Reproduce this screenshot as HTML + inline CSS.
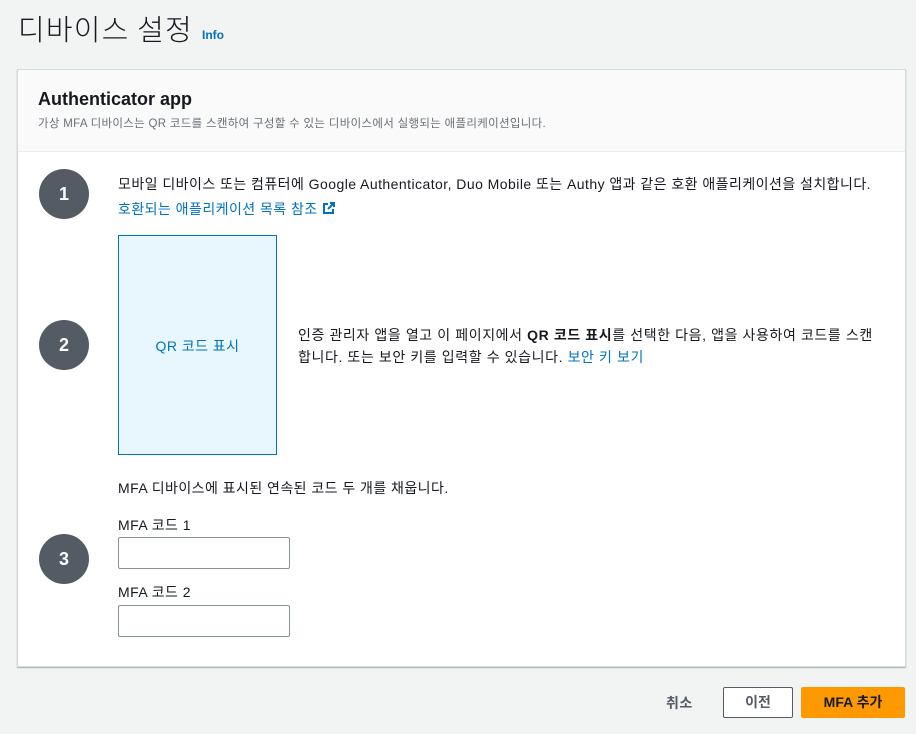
<!DOCTYPE html>
<html><head><meta charset="utf-8"><style>
body{margin:0;width:916px;height:734px;background:#f2f3f3;font-family:"Liberation Sans","Noto Sans CJK KR",sans-serif;color:#16191f;position:relative;overflow:hidden}
.a{position:absolute}
h1{position:absolute;left:18px;top:7px;margin:0;font-weight:300;font-size:29px;letter-spacing:1.2px;font-family:"Noto Sans CJK KR",sans-serif;color:#16191f}
.info{position:absolute;left:202px;top:28px;font-size:12px;font-weight:bold;color:#0073bb}
.card{position:absolute;left:17px;top:69px;width:887px;height:596px;background:#fff;border:1px solid #d5dbdb;box-shadow:0 1px 1px rgba(0,28,36,.3)}
.hd{position:absolute;left:0;top:0;width:887px;height:81px;background:#fafafa;border-bottom:1px solid #eaeded}
.circ{position:absolute;left:21px;width:50px;height:50px;border-radius:50%;background:#545b64;color:#fff;font-weight:bold;font-size:18px;text-align:center;line-height:50px}
.t{font-size:14px;white-space:nowrap;letter-spacing:0.45px}
.lnk{color:#0073bb}
.inp{position:absolute;left:100px;width:170px;height:30px;border:1px solid #879596;border-radius:2px;background:#fff}
</style></head><body>
<h1>디바이스 설정</h1><div class="info">Info</div>
<div class="card">
 <div class="hd">
  <div class="a" style="left:20px;top:19px;font-size:18px;font-weight:bold">Authenticator app</div>
  <div class="a t" style="left:20px;top:45px;font-size:11.5px;color:#687078;letter-spacing:0.3px">가상 MFA 디바이스는 QR 코드를 스캔하여 구성할 수 있는 디바이스에서 실행되는 애플리케이션입니다.</div>
 </div>
 <div class="circ" style="top:99px">1</div>
 <div class="a t" style="left:100px;top:104px">모바일 디바이스 또는 컴퓨터에 Google Authenticator, Duo Mobile 또는 Authy 앱과 같은 호환 애플리케이션을 설치합니다.</div>
 <div class="a t lnk" style="left:100px;top:129px">호환되는 애플리케이션 목록 참조 <svg width="13" height="13" viewBox="0 0 13 13" style="vertical-align:-1px"><path d="M6 2H2v9h9V7" fill="none" stroke="#0073bb" stroke-width="2"/><path d="M8 1h4v4M12 1L6 7" fill="none" stroke="#0073bb" stroke-width="2"/></svg></div>
 <div class="a" style="left:100px;top:165px;width:157px;height:218px;border:1px solid #0073bb;background:#e8f7fe"><div class="t lnk" style="text-align:center;margin-top:100px">QR 코드 표시</div></div>
 <div class="circ" style="top:250px">2</div>
 <div class="a t" style="left:280px;top:254px;line-height:22px;letter-spacing:0.6px">인증 관리자 앱을 열고 이 페이지에서 <b>QR 코드 표시</b>를 선택한 다음, 앱을 사용하여 코드를 스캔<br>합니다. 또는 보안 키를 입력할 수 있습니다. <span class="lnk">보안 키 보기</span></div>
 <div class="a t" style="left:100px;top:408px">MFA 디바이스에 표시된 연속된 코드 두 개를 채웁니다.</div>
 <div class="a t" style="left:100px;top:445px">MFA 코드 1</div>
 <div class="inp" style="top:467px"></div>
 <div class="circ" style="top:464px">3</div>
 <div class="a t" style="left:100px;top:512px">MFA 코드 2</div>
 <div class="inp" style="top:535px"></div>
</div>
<div class="a t" style="left:666px;top:693px;color:#545b64;font-weight:bold">취소</div>
<div class="a" style="left:723px;top:687px;width:68px;height:29px;border:1px solid #545b64;border-radius:2px;background:#fff;text-align:center;line-height:29px;font-size:14px;font-weight:bold;color:#545b64">이전</div>
<div class="a" style="left:801px;top:687px;width:104px;height:31px;background:#ff9900;border-radius:2px;text-align:center;line-height:31px;font-size:14px;font-weight:bold;color:#16191f">MFA 추가</div>
</body></html>
